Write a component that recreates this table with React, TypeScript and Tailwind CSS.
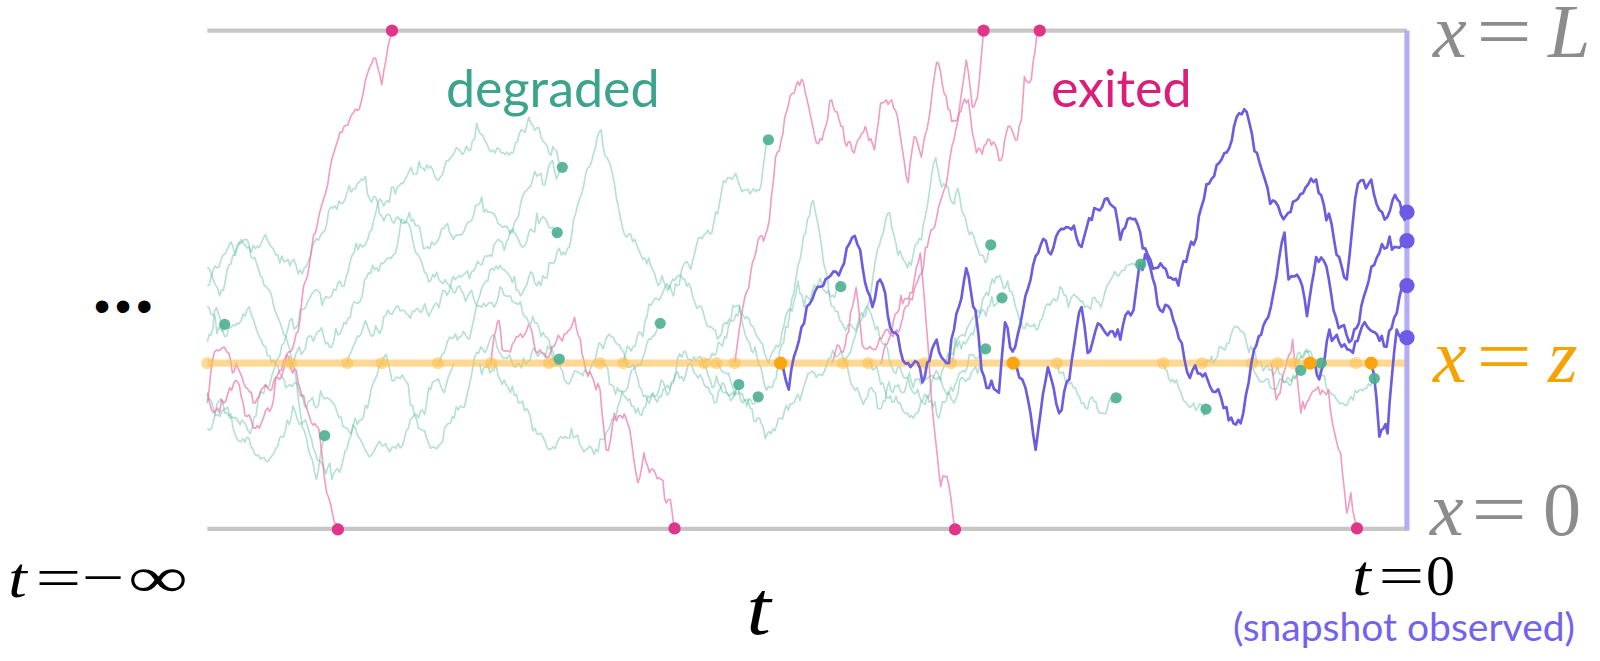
import React from "react";

type P = [number, number];

function rng(seed: number) {
  let a = seed >>> 0;
  return () => {
    a = (a + 0x6d2b79f5) >>> 0;
    let t = a;
    t = Math.imul(t ^ (t >>> 15), t | 1);
    t ^= t + Math.imul(t ^ (t >>> 7), t | 61);
    return ((t ^ (t >>> 14)) >>> 0) / 4294967296;
  };
}

function walk(pts: P[], seed: number, sigma = 3.5, dx = 2.5): string {
  const r = rng(seed);
  const g = () => {
    let u = r();
    if (u < 1e-9) u = 1e-9;
    return Math.sqrt(-2 * Math.log(u)) * Math.cos(2 * Math.PI * r());
  };
  let d = `M${pts[0][0]} ${pts[0][1]}`;
  for (let k = 0; k < pts.length - 1; k++) {
    const [xa, ya] = pts[k];
    const [xb, yb] = pts[k + 1];
    const n = Math.max(1, Math.round((xb - xa) / dx));
    const w = [0];
    for (let i = 1; i <= n; i++) w.push(w[i - 1] + sigma * g());
    for (let i = 1; i <= n; i++) {
      const t = i / n;
      const x = xa + (xb - xa) * t;
      let y = ya + (yb - ya) * t + (w[i] - t * w[n]);
      y = Math.max(30, Math.min(519, y));
      d += `L${x.toFixed(1)} ${y.toFixed(1)}`;
    }
  }
  return d;
}

const TEAL: P[][] = [
  [[203, 335], [210, 305], [220, 318]],
  [[203, 262], [215, 290], [228, 250], [242, 235], [255, 270], [268, 300], [280, 330], [292, 390], [302, 440], [310, 470], [318, 427]],
  [[203, 392], [225, 410], [245, 425], [262, 380], [280, 330], [300, 300], [325, 290], [345, 250], [370, 200], [395, 180], [420, 165], [445, 150], [467, 121], [485, 150], [505, 140], [522, 123], [538, 150], [551, 164]],
  [[285, 356], [305, 330], [325, 340], [345, 300], [365, 260], [385, 250], [405, 215], [425, 240], [450, 230], [470, 200], [490, 220], [510, 240], [530, 215], [546, 228]],
  [[374, 356], [390, 370], [410, 420], [428, 440], [445, 410], [465, 350], [485, 330], [505, 360], [525, 345], [548, 352]],
  [[429, 356], [450, 330], [470, 290], [490, 260], [510, 290], [530, 280], [550, 250], [570, 190], [589, 127], [600, 170], [612, 230], [628, 250], [645, 280], [660, 290], [675, 260], [690, 230], [705, 200], [721, 170], [735, 190], [744, 187], [753, 137]],
  [[470, 356], [500, 385], [520, 410], [540, 440], [560, 420], [580, 440], [600, 410], [615, 380], [630, 350], [647, 317]],
  [[538, 356], [555, 375], [575, 365], [595, 330], [615, 360], [640, 385], [660, 375], [680, 365], [700, 395], [712, 385], [724, 377]],
  [[588, 356], [605, 380], [625, 400], [650, 375], [672, 345], [690, 360], [710, 385], [728, 395], [743, 389]],
  [[611, 356], [630, 330], [648, 290], [665, 270], [685, 300], [705, 330], [722, 300], [738, 320], [755, 350], [770, 310], [790, 290], [808, 285], [824, 281]],
  [[690, 356], [710, 330], [725, 300], [740, 340], [755, 380], [770, 320], [782, 260], [795, 200], [805, 240], [815, 300], [835, 320], [850, 300], [862, 330], [880, 360], [895, 380], [910, 370], [930, 385], [948, 360], [966, 342]],
  [[702, 356], [718, 380], [735, 400], [750, 430], [765, 410], [780, 390], [800, 370], [820, 350], [840, 380], [860, 400], [875, 385], [890, 370], [905, 395], [920, 410], [935, 395], [950, 372], [966, 342]],
  [[826, 356], [838, 330], [850, 300], [862, 240], [870, 209], [880, 250], [893, 260], [905, 220], [915, 160], [925, 180], [935, 200], [950, 230], [960, 250], [971, 240]],
  [[851, 356], [865, 375], [880, 395], [895, 410], [910, 390], [925, 360], [940, 330], [955, 310], [970, 300], [982, 292]],
  [[932, 356], [950, 330], [965, 290], [980, 270], [995, 300], [1010, 320], [1025, 300], [1045, 290], [1065, 300], [1085, 280], [1100, 265], [1118, 259]],
  [[1036, 356], [1050, 375], [1062, 395], [1078, 405], [1094, 390]],
  [[1140, 356], [1155, 380], [1170, 395], [1182, 401]],
  [[1178, 356], [1195, 340], [1210, 320], [1230, 345], [1250, 365], [1262, 370], [1275, 363]],
  [[1227, 356], [1245, 380], [1260, 375], [1275, 350], [1295, 356]],
  [[1268, 356], [1285, 345], [1300, 380], [1315, 395], [1330, 385], [1347, 371]],
  [[203, 300], [220, 330], [240, 310], [260, 340], [280, 380], [300, 400], [320, 390], [340, 420], [360, 445], [380, 440], [400, 420], [420, 380], [445, 356]],
  [[203, 420], [220, 405], [238, 430], [255, 450], [270, 440], [285, 410], [305, 430], [325, 470], [340, 440], [360, 400], [375, 356]],
  [[203, 280], [230, 250], [260, 230], [290, 260], [320, 220], [350, 180], [380, 210], [410, 250], [440, 280], [470, 300], [500, 290], [530, 330], [548, 352]],
  [[340, 356], [360, 320], [390, 300], [420, 310], [450, 270], [480, 250], [510, 200], [530, 170], [551, 164]],
];

const TEAL_DOTS: P[] = [
  [220, 318], [318, 427], [551, 164], [546, 228], [548, 352], [753, 137], [647, 317], [724, 377], [743, 389], [824, 281],
  [971, 240], [982, 292], [966, 342], [1118, 259], [1094, 390], [1182, 401], [1275, 363], [1295, 356], [1347, 371],
];

const PINK: P[][] = [
  [[203, 395], [210, 345], [222, 345], [235, 365], [248, 395], [258, 380], [270, 370], [283, 345], [292, 325], [301, 271], [309, 228], [319, 189], [327, 150], [337, 124], [350, 108], [362, 66], [368, 57], [374, 83], [380, 46], [384, 30]],
  [[203, 385], [213, 400], [225, 380], [238, 395], [250, 420], [262, 400], [272, 370], [283, 350], [292, 375], [301, 402], [314, 434], [320, 483], [326, 505], [331, 519]],
  [[481, 356], [484, 330], [489, 314], [492, 343], [500, 345], [508, 330], [516, 324], [525, 345], [535, 350], [545, 335], [557, 324], [563, 311], [567, 330], [572, 353], [588, 382], [594, 441], [602, 405], [610, 410], [615, 415], [625, 473], [631, 444], [640, 460], [648, 470], [653, 493], [657, 490], [660, 513], [661, 519]],
  [[815, 356], [828, 340], [839, 282], [845, 338], [858, 343], [870, 323], [881, 304], [894, 287], [902, 248], [908, 320], [913, 392], [922, 477], [928, 467], [936, 519]],
  [[720, 356], [730, 291], [743, 235], [752, 225], [760, 154], [769, 115], [780, 85], [791, 98], [800, 140], [815, 98], [826, 124], [837, 150], [848, 124], [857, 147], [863, 101], [874, 98], [881, 124], [890, 179], [896, 134], [903, 154], [918, 61], [931, 108], [938, 118], [947, 59], [953, 105], [958, 95], [964, 30]],
  [[862, 356], [875, 330], [888, 300], [896, 284], [905, 262], [918, 213], [929, 170], [935, 137], [940, 111], [949, 98], [957, 150], [970, 137], [981, 157], [988, 124], [997, 137], [1001, 118], [1004, 75], [1009, 81], [1016, 36], [1019, 30]],
  [[1245, 356], [1251, 392], [1260, 360], [1267, 333], [1275, 405], [1292, 379], [1302, 382], [1308, 424], [1314, 444], [1320, 503], [1324, 483], [1330, 519]],
];

const PINK_DOTS: P[] = [
  [384, 30], [964, 30], [1019, 30], [331, 519], [661, 518], [936, 519], [1330, 518],
];

const PURPLE: P[][] = [
  [[765, 356], [773, 382], [778, 350], [788, 317], [804, 281], [822, 270], [835, 233], [843, 245], [855, 301], [865, 279], [875, 326], [890, 356], [904, 375], [918, 333], [930, 356], [947, 263], [956, 304], [962, 363], [979, 385], [985, 316], [995, 340], [1005, 290], [1020, 240], [1035, 232], [1050, 225], [1060, 242], [1075, 205], [1088, 200], [1098, 235], [1110, 215], [1125, 250], [1140, 262], [1155, 280], [1170, 240], [1185, 180], [1200, 150], [1212, 115], [1222, 110], [1232, 150], [1245, 200], [1258, 215], [1272, 195], [1290, 176], [1300, 216], [1320, 274], [1331, 180], [1344, 176], [1352, 206], [1365, 196], [1379, 208]],
  [[993, 356], [999, 370], [1005, 380], [1015, 441], [1027, 360], [1038, 405], [1048, 372], [1060, 301], [1066, 346], [1076, 317], [1093, 330], [1103, 309], [1111, 304], [1117, 258], [1125, 255], [1137, 304], [1150, 314], [1161, 353], [1174, 366], [1186, 379], [1202, 399], [1216, 415], [1229, 343], [1243, 311], [1259, 228], [1263, 274], [1274, 274], [1281, 310], [1290, 252], [1300, 261], [1307, 304], [1325, 333], [1339, 284], [1352, 248], [1362, 232], [1379, 236]],
  [[1284, 356], [1293, 372], [1303, 323], [1315, 340], [1326, 346], [1335, 320], [1345, 325], [1359, 340], [1369, 307], [1379, 280]],
  [[1344, 356], [1349, 389], [1352, 428], [1356, 420], [1360, 425], [1364, 372], [1369, 323], [1379, 331]],
];

const PURPLE_DOTS = [208, 236, 280, 331];
const ORANGE_FAINT = [203, 285, 340, 374, 429, 481, 538, 588, 611, 690, 702, 720, 826, 851, 906, 932, 1036, 1140, 1178, 1227, 1252, 1268, 1329];
const ORANGE_BRIGHT = [765, 993, 1284, 1344];

function Plot() {
  const teal = TEAL.map((p, i) => walk(p, 100 + i * 17, 4.8, 2));
  const pink = PINK.map((p, i) => walk(p, 900 + i * 31, 4.4, 2));
  const purple = PURPLE.map((p, i) => walk(p, 500 + i * 13, 5.4, 2.5));
  return (
    <svg viewBox="0 0 1568 648" width="1600" height="661" className="absolute left-0 top-0">
      <line x1="203" y1="30" x2="1379" y2="30" stroke="#c6c6c6" strokeWidth="4" />
      <line x1="203" y1="518.5" x2="1379" y2="518.5" stroke="#c6c6c6" strokeWidth="4" />
      {teal.map((d, i) => (
        <path key={"t" + i} d={d} fill="none" stroke="#5cbb9f" strokeOpacity="0.45" strokeWidth="1.6" strokeLinejoin="round" />
      ))}
      {pink.map((d, i) => (
        <path key={"p" + i} d={d} fill="none" stroke="#ea6fa6" strokeOpacity="0.68" strokeWidth="1.6" strokeLinejoin="round" />
      ))}
      <line x1="203" y1="356" x2="1379" y2="356" stroke="#fdc04f" strokeOpacity="0.6" strokeWidth="7" />
      {ORANGE_FAINT.map((x, i) => (
        <circle key={"of" + i} cx={x} cy="356" r="6" fill="#fdc04f" fillOpacity="0.55" />
      ))}
      <line x1="1379" y1="30" x2="1379" y2="520" stroke="#b3adf6" strokeWidth="5" />
      {purple.map((d, i) => (
        <path key={"u" + i} d={d} fill="none" stroke="#6c5ce0" strokeWidth="2.6" strokeLinejoin="round" />
      ))}
      {TEAL_DOTS.map(([x, y], i) => (
        <circle key={"td" + i} cx={x} cy={y} r="5.5" fill="#4cae92" fillOpacity="0.9" />
      ))}
      {PINK_DOTS.map(([x, y], i) => (
        <circle key={"pd" + i} cx={x} cy={y} r="6" fill="#e0358a" />
      ))}
      {ORANGE_BRIGHT.map((x, i) => (
        <circle key={"ob" + i} cx={x} cy="356" r="6.5" fill="#fca512" />
      ))}
      {PURPLE_DOTS.map((y, i) => (
        <circle key={"ud" + i} cx="1379" cy={y} r="7.5" fill="#6c5be6" />
      ))}
    </svg>
  );
}

export default function App() {
  return (
    <div className="relative w-[1600px] h-[661px] overflow-hidden bg-white">
      <Plot />

      {/* ellipsis */}
      <div className="absolute left-[94px] top-[283px] text-[46px] leading-none tracking-[5px] text-black font-['Liberation_Sans',sans-serif]">
        •••
      </div>

      {/* sans labels */}
      <div className="absolute left-[446px] top-[61px] text-[52px] leading-none text-[#3ba48b] font-['Lato',sans-serif]">
        degraded
      </div>
      <div className="absolute left-[1051px] top-[61px] text-[52px] leading-none text-[#db1f78] font-['Lato',sans-serif]">
        exited
      </div>
      <div className="absolute left-[1233px] top-[607px] text-[39px] leading-none text-[#7363ec] font-['Lato',sans-serif]">
        (snapshot observed)
      </div>

      {/* x = L */}
      <div className="absolute left-[1433px] top-[1px] flex items-baseline text-[76px] leading-[0.8] text-[#8c8c8c] font-['Liberation_Serif',serif]">
        <span className="italic w-[34px]">x</span>
        <span className="ml-[13px] inline-block w-[48px] text-center scale-x-[1.3]">=</span>
        <span className="ml-[20px] italic">L</span>
      </div>

      {/* x = z */}
      <div className="absolute left-[1433px] top-[326px] flex items-baseline text-[76px] leading-[0.8] text-[#f5a300] font-['Liberation_Serif',serif]">
        <span className="italic w-[34px]">x</span>
        <span className="ml-[13px] inline-block w-[48px] text-center scale-x-[1.3]">=</span>
        <span className="ml-[20px] italic">z</span>
      </div>

      {/* x = 0 */}
      <div className="absolute left-[1430px] top-[479px] flex items-baseline text-[76px] leading-[0.8] text-[#8c8c8c] font-['Liberation_Serif',serif]">
        <span className="italic w-[34px]">x</span>
        <span className="ml-[11px] inline-block w-[48px] text-center scale-x-[1.3]">=</span>
        <span className="ml-[20px]">0</span>
      </div>

      {/* t = -inf */}
      <div className="absolute left-[10px] top-[549px] flex items-baseline text-[58px] leading-none text-black font-['Liberation_Serif',serif]">
        <span className="italic inline-block w-[24px] scale-x-[1.15]">t</span>
        <span className="ml-[4px] inline-block w-[41px] text-center scale-x-[1.4]">=</span>
        <span className="ml-[5px] inline-block w-[38px] text-center scale-x-[1.3]">−</span>
        <span className="ml-[8px] inline-block w-[56px] text-center scale-x-[1.45]">∞</span>
      </div>

      {/* t */}
      <div className="absolute left-[748px] top-[570px] text-[76px] leading-none italic text-black font-['Liberation_Serif',serif]">
        <span className="inline-block scale-x-[1.15]">t</span>
      </div>

      {/* t = 0 */}
      <div className="absolute left-[1354px] top-[553px] flex items-baseline text-[58px] leading-[0.8] text-black font-['Liberation_Serif',serif]">
        <span className="italic inline-block w-[22px] scale-x-[1.15]">t</span>
        <span className="ml-[5px] inline-block w-[41px] text-center scale-x-[1.4]">=</span>
        <span className="ml-[4px]">0</span>
      </div>
    </div>
  );
}
